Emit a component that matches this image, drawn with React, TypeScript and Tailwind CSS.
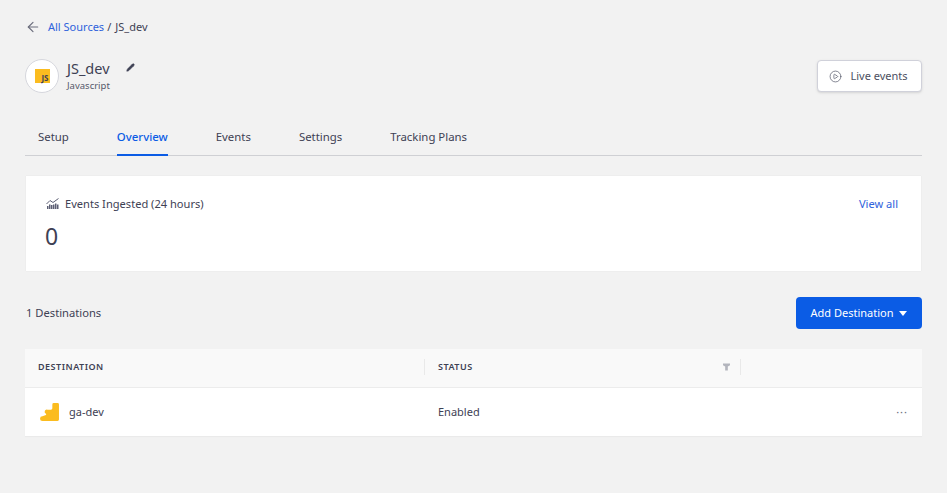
import { ArrowLeft, Pencil, CirclePlay } from 'lucide-react';

const tabs = ['Setup', 'Overview', 'Events', 'Settings', 'Tracking Plans'];

const ChartIcon = () => (
  <svg width="14" height="12" viewBox="0 0 14 12" fill="none" className="text-[#5c5f74]">
    <path d="M0.5 6 L4 2.5 L7 4.5 L12.5 0.5" stroke="currentColor" strokeWidth="1" />
    <path
      d="M1 11V8h1.500v3zM3 11V6.500h1.500V11zM5 11V7h1.500v4zM7 11V6.500h1.500V11zM9 11V5.500h1.500V11zM11 11V6.500h1.500V11z"
      fill="currentColor"
    />
  </svg>
);

const GaIcon = () => (
  <svg width="19" height="18" viewBox="0 0 20 19" className="ml-[1px]">
    <path
      d="M13 1.500A1.500 1.500 0 0 1 14.500 0h4A1.500 1.500 0 0 1 20 1.500v16a1.500 1.500 0 0 1-1.500 1.500h-16a2.500 2.500 0 0 1 0-5L5.500 13a1 1 0 0 0 1-1v-.5A1.500 1.500 0 0 1 8 7h3.500A1.500 1.500 0 0 0 13 5.500z"
      fill="#fbbc1f"
    />
  </svg>
);

const FilterIcon = () => (
  <svg width="7" height="8" viewBox="0 0 8 8" className="text-[#b3b5bd]">
    <path d="M0 0h8v2L5.500 3.500V8h-3V3.500L0 2z" fill="currentColor" />
  </svg>
);

const App = () => {
  return (
    <div className="h-[493px] w-[947px] overflow-hidden bg-[#f2f2f2] px-[25px] pt-[17px] font-['Noto_Sans',sans-serif] text-[#3e4154]">
      <div className="flex h-5 items-center text-[11px] leading-5">
        <ArrowLeft size={16} strokeWidth={1.75} className="text-[#6b6d7c]" />
        <a className="ml-[7px] text-[#2f62dc]">All Sources</a>
        <span className="ml-[3px]">/</span>
        <span className="ml-[4px]">JS_dev</span>
      </div>

      <div className="mt-[22px] flex items-start justify-between">
        <div className="flex">
          <div className="flex h-[34px] w-[34px] items-center justify-center rounded-full border border-[#d6d7dd] bg-white">
            <div className="flex h-[14px] w-[15px] items-end justify-end bg-[#fbbc1f] pr-[1px] text-[8px] font-bold leading-[10px] text-[#3e4154]">
              JS
            </div>
          </div>
          <div className="ml-[8px] -mt-[1px]">
            <div className="flex items-center">
              <span className="text-[14.500px] leading-5">JS_dev</span>
              <Pencil size={9} fill="currentColor" strokeWidth={1.5} className="ml-[16px] -mt-[2px]" />
            </div>
            <div className="mt-[1px] text-[9.500px] leading-[14px] text-[#55586a]">Javascript</div>
          </div>
        </div>
        <button className="mt-[1px] flex h-[32px] w-[105px] items-center justify-center rounded-[4px] border border-[#d0d1da] bg-white text-[11px] text-[#4c4f61] shadow-sm">
          <CirclePlay size={13} strokeWidth={1.25} className="mr-[8px] -ml-[2px]" />
          Live events
        </button>
      </div>

      <div className="mt-[32px] flex h-[31px] gap-[48px] border-b border-[#cfd0d4] pl-[13px] text-[11.400px]">
        {tabs.map((tab) => (
          <div
            key={tab}
            className={
              tab === 'Overview'
                ? 'h-[31px] border-b-2 border-[#0b5ce5] pt-[3px] font-medium text-[#0b5ce5]'
                : 'pt-[3px]'
            }
          >
            {tab}
          </div>
        ))}
      </div>

      <div className="mx-[1px] mt-[20px] h-[95px] bg-white px-[20px] pt-[18px] shadow-[0_0_1px_rgba(0,0,0,0.1)]">
        <div className="flex items-center justify-between text-[11.100px] leading-5">
          <div className="flex items-center gap-[5px]">
            <ChartIcon />
            <span>Events Ingested (24 hours)</span>
          </div>
          <a className="mr-[3px] text-[#2f62dc]">View all</a>
        </div>
        <div className="-ml-[1px] mt-[8px] text-[23px] leading-[28px]">0</div>
      </div>

      <div className="mt-[26px] flex h-[32px] items-center justify-between text-[11.200px]">
        <span className="pl-[1px]">1 Destinations</span>
        <button className="flex h-[32px] w-[126px] items-center justify-center gap-[6px] rounded-[4px] bg-[#0b5ce5] pt-[1px] text-[11px] text-white">
          Add Destination
          <svg width="8" height="5" viewBox="0 0 8 5">
            <path d="M0 0h8L4 5z" fill="currentColor" />
          </svg>
        </button>
      </div>

      <div className="mt-[20px] bg-white">
        <div className="flex h-[39px] items-center border-b border-[#ececec] bg-[#f9f9f9] pb-[2px] text-[9px] font-semibold tracking-[0.5px]">
          <div className="w-[399px] pl-[13px]">DESTINATION</div>
          <div className="flex h-[16px] w-[317px] items-center justify-between border-x border-[#e9e9e9] pl-[13px] pr-[10px]">
            <span>STATUS</span>
            <FilterIcon />
          </div>
        </div>
        <div className="flex h-[48px] items-center text-[11px] shadow-[0_1px_1px_rgba(0,0,0,0.03)]">
          <div className="flex w-[413px] items-center pl-[14px]">
            <GaIcon />
            <span className="ml-[10px]">ga-dev</span>
          </div>
          <div className="flex-1">Enabled</div>
          <div className="pb-[2px] pr-[14px] leading-none tracking-[1px] text-[#6b6d7c]">···</div>
        </div>
      </div>
    </div>
  );
};

export default App;
